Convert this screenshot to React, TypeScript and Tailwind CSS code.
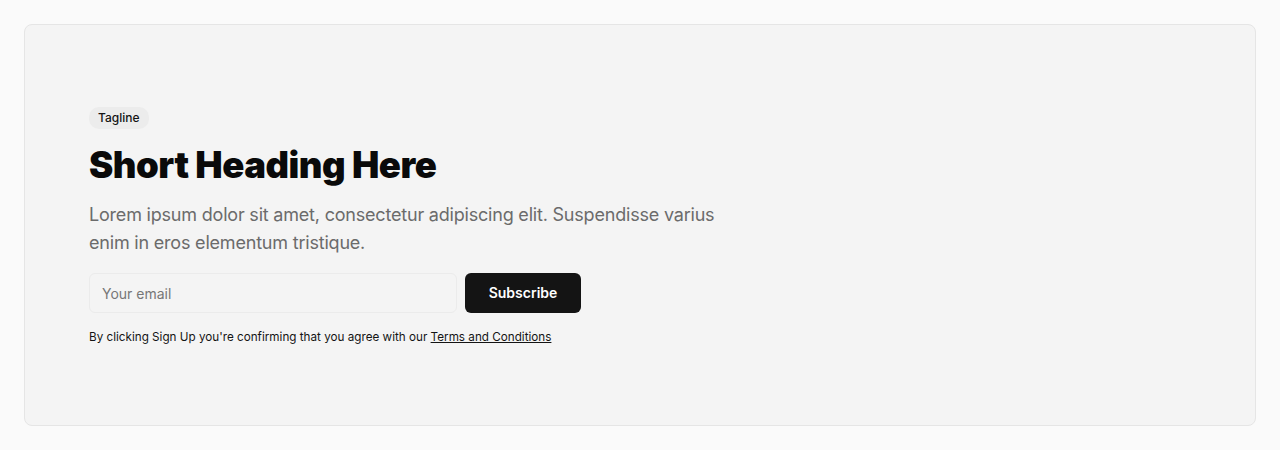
import React from "react";

export default function App() {
  return (
    <div className="min-h-[450px] bg-[#fafafa] p-6" style={{ fontFamily: "Inter, 'Noto Sans', sans-serif" }}>
      <div className="rounded-lg border border-[#e5e5e5] bg-[#f4f4f4] px-16 pt-[82px] pb-[80px]">
        <div className="flex flex-col">
          <span className="self-start rounded-[10px] bg-[#ececec] px-[9px] py-[3px] text-[12px] font-medium leading-4 text-[#141414]">Tagline</span>
          <h1 className="mt-[14px] text-[36.5px] font-black leading-[44px] tracking-[-0.5px] text-[#0a0a0a]">Short Heading Here</h1>
          <p className="mt-[14px] max-w-[660px] text-[18px] leading-[28px] tracking-[-0.2px] text-[#6b6b6b]">
            Lorem ipsum dolor sit amet, consectetur adipiscing elit. Suspendisse varius enim in eros elementum tristique.
          </p>
          <form className="mt-4 flex gap-2" onSubmit={(e) => e.preventDefault()}>
            <input
              type="email"
              placeholder="Your email"
              className="h-10 w-[368px] rounded-md border border-[#ebebeb] bg-[#f4f4f4] px-3 text-[14px] text-[#141414] placeholder:text-[#777] outline-none"
            />
            <button type="submit" className="h-10 w-[116px] rounded-md bg-[#141414] pb-[2px] text-[14px] font-semibold text-white">
              Subscribe
            </button>
          </form>
          <p className="mt-4 text-[11.7px] leading-4 text-[#141414]">
            By clicking Sign Up you're confirming that you agree with our <a href="#" className="underline">Terms and Conditions</a>
          </p>
        </div>
      </div>
    </div>
  );
}
